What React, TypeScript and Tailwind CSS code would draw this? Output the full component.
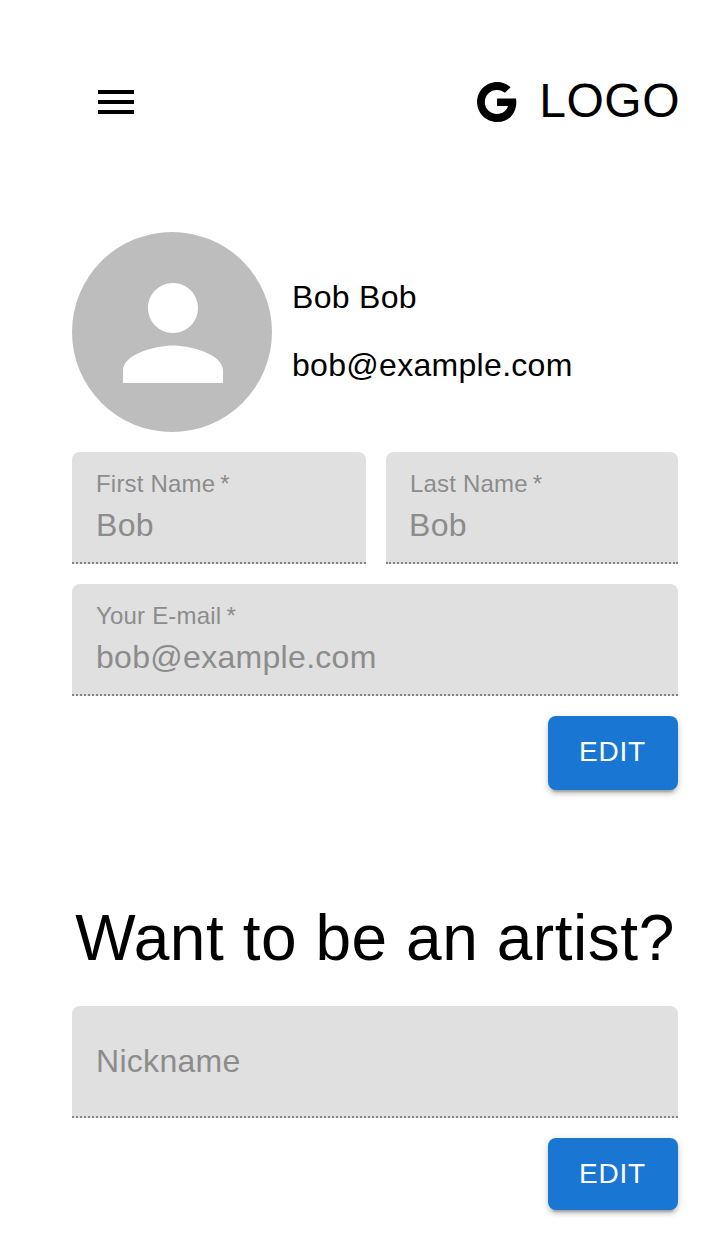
import React from "react";

type FieldProps = { label: string; value?: string; required?: boolean; className?: string; valueClassName?: string };

function Field({ label, value, required, className = "", valueClassName = "" }: FieldProps) {
  return (
    <div className={`flex h-28 flex-col rounded-t-lg border-b-2 border-dotted border-[#858585] bg-[#e0e0e0] px-6 text-[#8c8c8c] ${className}`}>
      {value ? (
        <>
          <label className="mt-4 text-[24px] leading-8 tracking-[0.2px]">
            {label}
            {required && <span className="ml-[5px]">*</span>}
          </label>
          <span className={`mt-1.5 text-[32px] leading-[38px] tracking-[0.3px] ${valueClassName}`}>{value}</span>
        </>
      ) : (
        <label className="mt-[36px] text-[32px] leading-[38px] tracking-[0.3px]">{label}</label>
      )}
    </div>
  );
}

function EditButton({ className }: { className: string }) {
  return (
    <button className={`w-[130px] self-end rounded-lg bg-[#1976d2] pr-px text-[28px] font-normal tracking-[0.8px] text-white shadow-[0_6px_2px_-4px_rgba(0,0,0,0.2),0_4px_4px_0_rgba(0,0,0,0.14),0_2px_10px_0_rgba(0,0,0,0.12)] ${className}`}>
      EDIT
    </button>
  );
}

export default function App() {
  return (
    <main className="flex h-[1250px] w-[718px] flex-col overflow-hidden bg-white pr-10 pl-[72px] font-['Liberation_Sans',Arial,sans-serif] text-black">
      <header className="mt-[70px] flex h-16 items-center justify-between pl-5">
        <svg className="size-12" viewBox="0 0 24 24" fill="currentColor">
          <path d="M3 18h18v-2H3v2zm0-5h18v-2H3v2zm0-7v2h18V6H3z" />
        </svg>
        <div className="-mr-[2px] flex items-center">
          <svg className="mr-[19px] size-12" viewBox="0 0 24 24" fill="currentColor">
            <path d="M12.545 10.239v3.821h5.445c-.712 2.315-2.647 3.972-5.445 3.972a6.033 6.033 0 110-12.064c1.498 0 2.866.549 3.921 1.453l2.814-2.814A9.969 9.969 0 0012.545 2C7.021 2 2.543 6.477 2.543 12s4.478 10 10.002 10c8.396 0 10.249-7.85 9.426-11.748l-9.426-.013z" />
          </svg>
          <span className="pb-0.5 text-[48px] leading-[56px] tracking-[0.5px]">LOGO</span>
        </div>
      </header>

      <section className="mt-[98px] flex h-[200px] items-center gap-5">
        <div className="flex size-[200px] items-center justify-center rounded-full bg-[#bdbdbd] pt-0.5 pl-0.5 text-white">
          <svg className="size-[150px]" viewBox="0 0 24 24" fill="currentColor">
            <path d="M12 12c2.21 0 4-1.79 4-4s-1.79-4-4-4-4 1.79-4 4 1.79 4 4 4zm0 2c-2.67 0-8 1.34-8 4v2h16v-2c0-2.66-5.33-4-8-4z" />
          </svg>
        </div>
        <div className="flex flex-col gap-5 pb-0.5 text-[32px] leading-[48px] tracking-[0.3px]">
          <p>Bob Bob</p>
          <p>bob@example.com</p>
        </div>
      </section>

      <section className="mt-5 flex flex-col gap-5">
        <div className="flex gap-5">
          <Field label="First Name" required value="Bob" className="w-[294px]" />
          <Field label="Last Name" required value="Bob" className="w-[292px]" valueClassName="-ml-px" />
        </div>
        <Field label="Your E-mail" required value="bob@example.com" />
        <EditButton className="h-[74px] pb-0.5" />
      </section>

      <section className="mt-[98px] flex flex-col">
        <h1 className="-mx-2 h-[98px] pt-px text-center text-[64px] leading-[98px] tracking-[0.55px] whitespace-nowrap">Want to be an artist?</h1>
        <Field label="Nickname" className="mt-5" />
        <EditButton className="mt-5 h-[72px]" />
      </section>
    </main>
  );
}
